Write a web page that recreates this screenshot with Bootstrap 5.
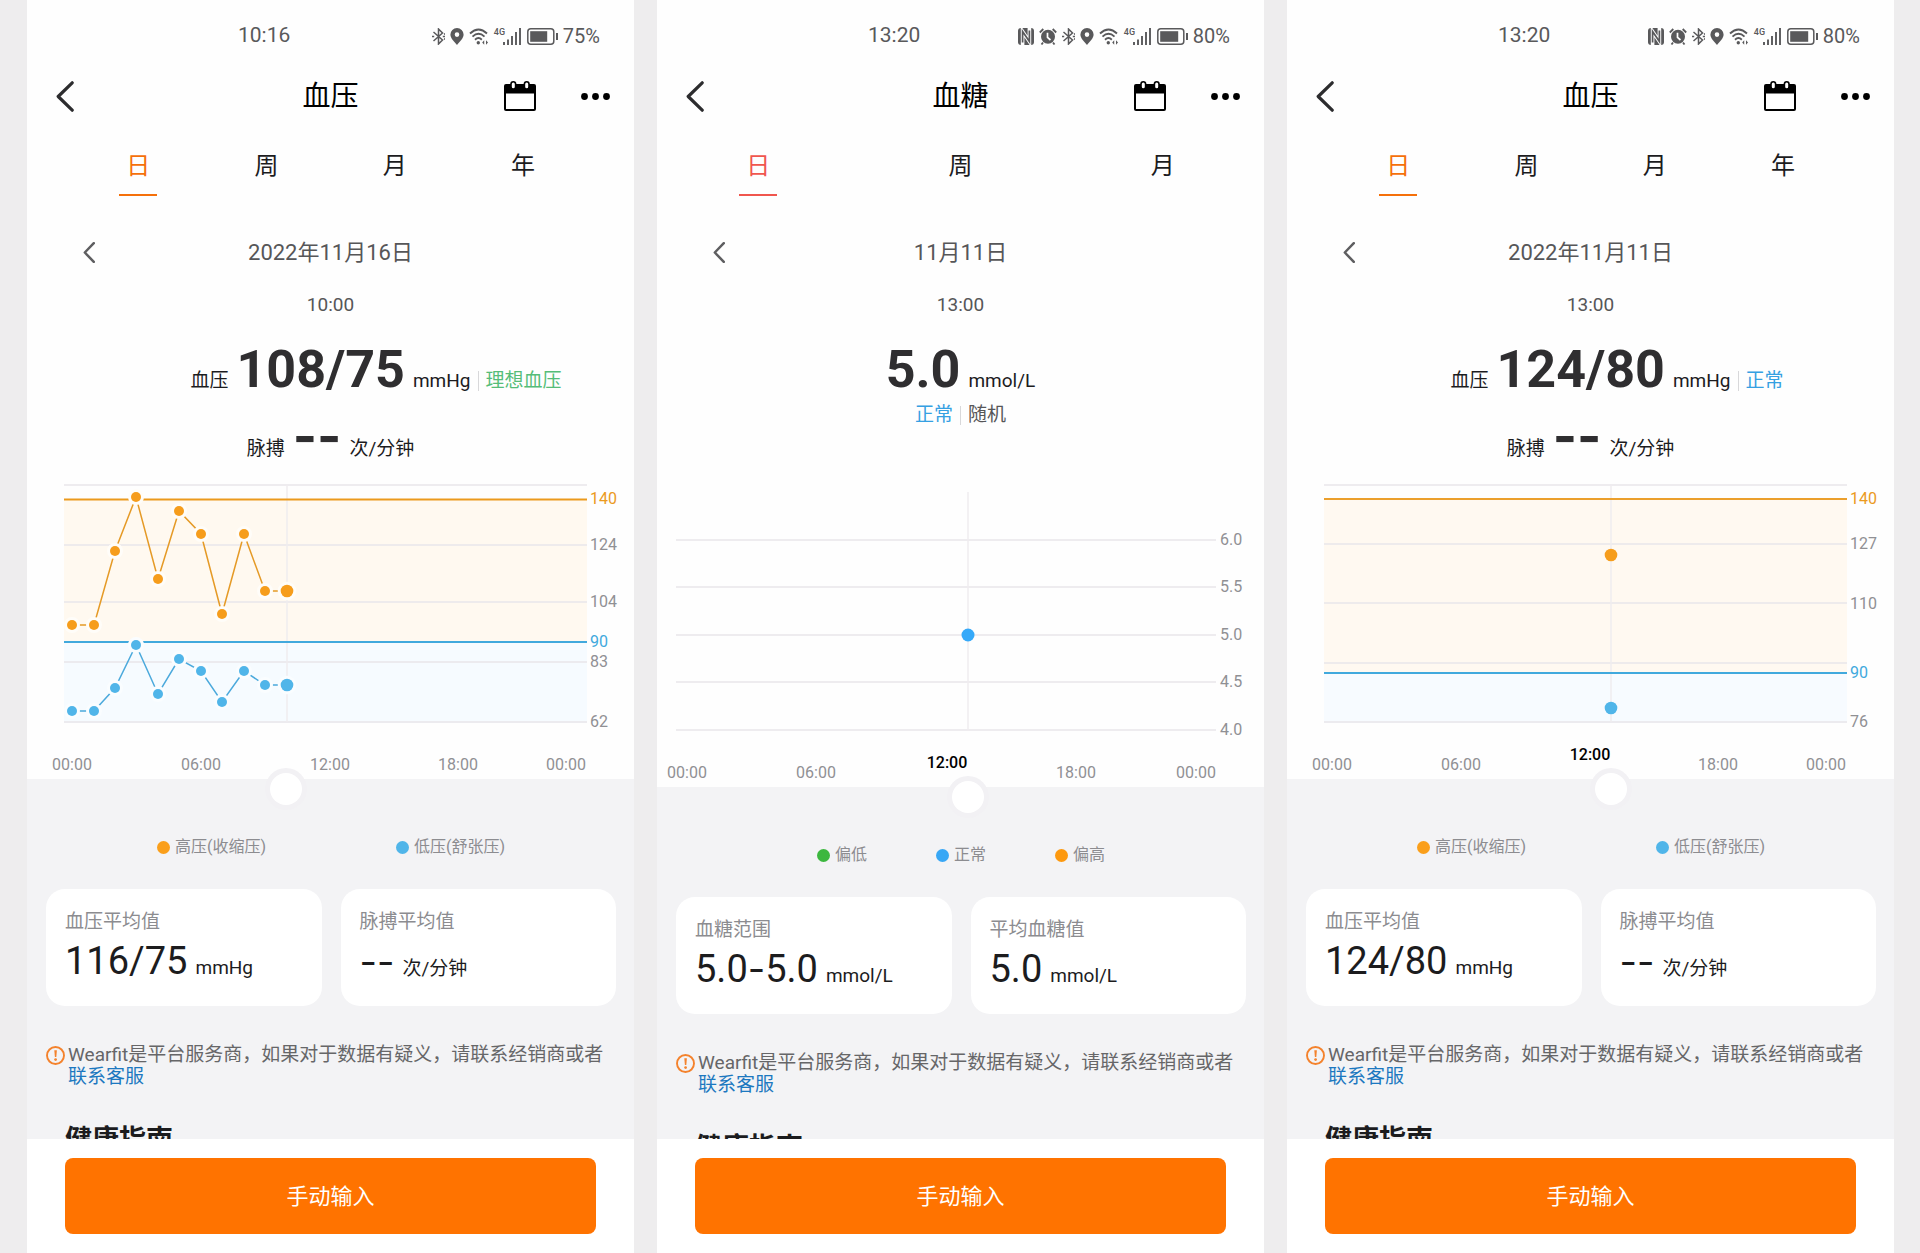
<!DOCTYPE html>
<html lang="zh-CN">
<head>
<meta charset="utf-8">
<meta name="viewport" content="width=device-width, initial-scale=1">
<title>Wearfit 健康数据</title>
<link href="https://cdn.jsdelivr.net/npm/bootstrap@5.3.0/dist/css/bootstrap.min.css" rel="stylesheet">
<style>
  body { background: #eeedee; font-family: Roboto, "Noto Sans CJK SC", sans-serif; color: #1c1c1e; }
  button, input { font-family: inherit; }
  .stage { height: 100vh; padding: 0 26px 0 27px; gap: 23px; }
  .phone { flex: 1 1 0; min-width: 0; background: #fefefe; --accent: #f5700a; }
  .phone.sugar { --accent: #f0564e; }
  .scroller { min-height: 0; }

  .statusbar { height: 72px; padding: 0 34px 0 211px; font-size: 21px; color: #59595b; }
  .statusbar .sys { gap: 5px; font-size: 20px; }
  .statusbar svg { flex: none; }
  .net { display: flex; width: 28px; height: 17px; font-size: 9px; line-height: 9px; font-weight: 500; }
  .net svg { margin-left: -2px; }

  .titlebar { height: 46px; padding: 0 24px 0 29px; display: grid; grid-template-columns: 1fr auto 1fr; }
  .titlebar h1 { font-size: 28px; line-height: 46px; font-weight: 400; color: #000; padding: 2px 5px 0 0; }
  .titlebar .acts { gap: 45px; }
  .bare { border: 0; background: none; padding: 0; display: flex; }

  .periods { margin-top: 30px; padding: 0 47px; }
  .sugar .periods { padding: 0; }
  .periods a { color: #1c1c1e; font-size: 24px; line-height: 36px; text-decoration: none; flex: 1 1 0; display: flex; flex-direction: column; align-items: center; }
  .periods a::after { content: ""; width: 38px; height: 2px; margin-top: 10px; }
  .periods a.on { color: var(--accent); }
  .periods a.on::after { background: var(--accent); }

  .dayrow { height: 40px; margin-top: 36px; padding: 0 56px; display: grid; grid-template-columns: 1fr auto 1fr; align-items: center; font-size: 22px; color: #565658; }
  .clock { margin-top: 20px; font-size: 19px; line-height: 26px; color: #565658; }
  .reading { display: grid; grid-template-columns: 1fr auto 1fr; align-items: baseline; margin-top: 22px; height: 60px; font-size: 19px; line-height: 60px; }
  .reading + .reading { margin-top: 7px; }
  .reading .core { grid-column: 2; gap: 8px; }
  .big { font-size: 52px; font-weight: 700; color: #2f2e30; }
  .dash { font-family: Inter, sans-serif; }
  .flag { line-height: 20px; margin-left: 7px; padding-left: 7px; border-left: 1px solid #d8d8da; justify-self: start; }
  .good { color: #55bd78; }
  .normal { color: #35a0e2; }
  .kind { font-size: 19px; line-height: 26px; margin: 2px 0 38px; color: #565658; gap: 7px; }
  .kind i { width: 1px; height: 19px; background: #d8d8da; }

  .chart svg { display: block; width: 100%; height: auto; font-size: 16px; fill: #909094; }
  .chart .grid { stroke: #e9e6ea; stroke-width: 1.5; }
  .chart .cursor { stroke: #efecef; stroke-width: 1.5; }
  .chart .now { fill: #000; font-weight: 500; }
  .chart .wire { fill: none; stroke-width: 1.5; }
  .chart input { position: absolute; left: 29px; right: 53px; bottom: -26px; width: auto; height: 32px; margin: 0; appearance: none; background: none; z-index: 1; }
  .sugar .chart input { left: 14px; right: 63px; }
  .chart input::-webkit-slider-thumb { appearance: none; width: 32px; height: 32px; border-radius: 50%; background: #fff; border: 0; box-shadow: 0 0 0 5px #f2f1f4; }
  .chart input::-moz-range-thumb { width: 32px; height: 32px; border-radius: 50%; background: #fff; border: 0; box-shadow: 0 0 0 5px #f2f1f4; }

  .lower { background: #f3f3f5; padding: 56px 18px 0 19px; }
  .keys { gap: 130px; font-size: 16px; line-height: 24px; color: #8c8c90; }
  .sugar .keys { gap: 69px; }
  .keys span { display: flex; align-items: center; gap: 5px; }
  .keys i { width: 13px; height: 13px; border-radius: 50%; }
  .tiles { margin-top: 30px; gap: 19px; }
  .tile { flex: 1 1 0; background: #fff; border-radius: 19px; padding: 19px 19px 20px; }
  .tile h2 { font-size: 19px; line-height: 28px; font-weight: 400; color: #8c8c90; margin: 0 0 1px; }
  .tile p { font-size: 19px; line-height: 48px; height: 49px; gap: 8px; }
  .tile .num { font-size: 38px; }
  .note { margin-top: 38px; gap: 3px; font-size: 19px; line-height: 22px; color: #666668; }
  .note svg { flex: none; margin-top: 2px; }
  .note a { color: #1c78c0; text-decoration: none; }
  .guide { margin: 32px 0 0 19px; font-size: 27px; line-height: 40px; font-weight: 700; }

  .dock { background: #fff; padding: 19px 38px; }
  .entry { --bs-btn-bg: #ff7300; --bs-btn-color: #fff; --bs-btn-hover-bg: #f06c00; --bs-btn-hover-color: #fff; --bs-btn-border-radius: 8px; --bs-btn-border-width: 0; --bs-btn-font-size: 22px; height: 76px; }
</style>
<script src="https://cdn.jsdelivr.net/npm/bootstrap@5.3.0/dist/js/bootstrap.bundle.min.js" defer></script>
</head>
<body>
<svg width="0" height="0" class="position-absolute" aria-hidden="true">
  <symbol id="nfc" viewBox="0 0 16 17"><rect width="16" height="17" rx="3" fill="#59595b"/><path d="M4.600 17V3.500L11.400 13.500V0" fill="none" stroke="#fefefe" stroke-width="3.600"/><path d="M4.600 14.500V3.500L11.400 13.500V2.500" fill="none" stroke="#59595b" stroke-width="1.700"/></symbol>
  <symbol id="alarm" viewBox="0 0 18 17"><circle cx="9" cy="8.800" r="7" fill="#59595b"/><path d="M.8 4.500L4.300 1M17.200 4.500L13.700 1M4 14.500L2.500 16.500M14 14.500L15.500 16.500" stroke="#59595b" stroke-width="1.800"/><path d="M8.500 4.800V9.300L11.500 12" fill="none" stroke="#fefefe" stroke-width="1.700"/></symbol>
  <symbol id="bt" viewBox="0 0 13 17"><path d="M1.500 4L10.500 12L6.500 16V1L10.500 5L1.500 13" fill="none" stroke="#59595b" stroke-width="1.500"/><path d="M0 8.500H2.200M10.800 8.500H13M12 6.300L13 5.800M12 10.700L13 11.200" stroke="#59595b" stroke-width="1.600"/></symbol>
  <symbol id="pin" viewBox="0 0 14 17"><path d="M7 0A6.600 6.600 0 0 0 .4 6.600C.4 10.500 4.500 14 7 17C9.500 14 13.600 10.500 13.600 6.600A6.600 6.600 0 0 0 7 0zM7 4.300A2.300 2.300 0 1 1 7 8.900A2.300 2.300 0 1 1 7 4.300z" fill="#59595b"/></symbol>
  <symbol id="wifi" viewBox="0 0 20 17"><path d="M1 5.500Q9.500-2.500 18 5.500M3.500 8.600Q9.500 3 15.500 8.600M6 11.700Q9.500 8.500 12.800 11.700" fill="none" stroke="#59595b" stroke-width="1.900"/><circle cx="9.300" cy="14.800" r="1.700" fill="#59595b"/><path d="M13.200 14.500L15.200 12.300V16.700zM19 14.500L17 12.300V16.700z" fill="#59595b"/></symbol>
  <symbol id="bars" viewBox="0 0 18 17"><path d="M1 14V17M5 11.500V17M9 8V17M13 4V17M17 0V17" stroke="#59595b" stroke-width="1.900"/></symbol>
  <symbol id="back" viewBox="0 0 18 31"><path d="M16.200 1.800L2.200 15.500L16.200 29.200" fill="none" stroke="#2c2c2e" stroke-width="3.200" stroke-linecap="round" stroke-linejoin="round"/></symbol>
  <symbol id="prev" viewBox="0 0 12 21"><path d="M10.800 1.200L1.800 10.500L10.800 19.800" fill="none" stroke="#5e5e60" stroke-width="2.500" stroke-linecap="round" stroke-linejoin="round"/></symbol>
  <symbol id="cal" viewBox="0 0 32 30"><path d="M2 3H30Q32 3 32 5V28Q32 30 30 30H2Q0 30 0 28V5Q0 3 2 3z"/><path d="M2 12.500H30V28H2z" fill="#fff"/><rect x="7" y=".8" width="4.600" height="7.200" rx="2.300" fill="#fff" stroke="#000" stroke-width="1.600"/><rect x="20.400" y=".8" width="4.600" height="7.200" rx="2.300" fill="#fff" stroke="#000" stroke-width="1.600"/></symbol>
  <symbol id="more" viewBox="0 0 29 7"><circle cx="3.500" cy="3.500" r="3.400"/><circle cx="14.500" cy="3.500" r="3.400"/><circle cx="25.500" cy="3.500" r="3.400"/></symbol>
  <symbol id="warn" viewBox="0 0 19 19"><circle cx="9.500" cy="9.500" r="8.500" fill="none" stroke="#f4822c" stroke-width="1.900"/><path d="M8.300 4.300H10.900L10.300 11H8.900z" fill="#f4822c"/><circle cx="9.600" cy="13.600" r="1.400" fill="#f4822c"/></symbol>
</svg>

<main class="stage d-flex">

  <!-- 血压 11月16日 -->
  <section class="phone d-flex flex-column">
    <div class="scroller flex-fill overflow-hidden">
      <div class="statusbar d-flex justify-content-between align-items-center">
        <span>10:16</span>
        <div class="sys d-flex align-items-center">
          <svg width="13" height="17"><use href="#bt"/></svg><svg width="14" height="17"><use href="#pin"/></svg><svg width="20" height="17"><use href="#wifi"/></svg><span class="net">4G<svg width="18" height="17"><use href="#bars"/></svg></span>
          <svg width="31" height="17" fill="#59595b"><rect x=".8" y=".8" width="26" height="15.400" rx="3" fill="none" stroke="#59595b" stroke-width="1.500"/><rect x="3.200" y="3.200" width="17" height="10.600"/><path d="M29 5H31V12H29z"/></svg>
          <span>75%</span>
        </div>
      </div>
      <header class="titlebar align-items-center">
        <button class="bare" aria-label="返回"><svg width="18" height="31"><use href="#back"/></svg></button>
        <h1 class="m-0">血压</h1>
        <div class="acts d-flex align-items-center justify-content-end">
          <button class="bare" aria-label="日历"><svg width="32" height="30"><use href="#cal"/></svg></button>
          <button class="bare" aria-label="更多"><svg width="29" height="7"><use href="#more"/></svg></button>
        </div>
      </header>
      <nav class="periods d-flex"><a class="on" href="#" aria-current="true">日</a><a href="#">周</a><a href="#">月</a><a href="#">年</a></nav>
      <div class="dayrow"><button class="bare" aria-label="前一天"><svg width="12" height="21"><use href="#prev"/></svg></button><span>2022年11月16日</span></div>
      <div class="clock text-center">10:00</div>
      <div class="reading"><div class="core d-flex align-items-baseline"><span>血压</span><span class="big">108/75</span><span>mmHg</span></div><span class="flag good">理想血压</span></div>
      <div class="reading"><div class="core d-flex align-items-baseline"><span>脉搏</span><span class="big dash">--</span><span>次/分钟</span></div></div>
      <div class="chart position-relative">
        <svg viewBox="0 0 607 312" role="img" aria-label="血压趋势">
          <rect x="37" y="33" width="523" height="143" fill="#fff9f0"/>
          <rect x="37" y="176" width="523" height="80" fill="#f6fbff"/>
          <path class="grid" d="M37 18H560M37 78H560M37 135H560M37 195H560M37 255H560"/>
          <path class="cursor" d="M260 18V255"/>
          <path d="M37 32.500H560" stroke="#eb9a1d" stroke-width="2"/>
          <path d="M37 175H560" stroke="#41a9dd" stroke-width="2"/>
          <path class="wire" stroke="#e59a26" d="M45 158H67L88 84L109 30L131 112L152 44L174 67L195 147L217 67L238 124H260"/>
          <g fill="#f69d1c" stroke="#fffdf9" stroke-width="6" paint-order="stroke">
            <circle cx="45" cy="158" r="5"/><circle cx="67" cy="158" r="5"/><circle cx="88" cy="84" r="5"/><circle cx="109" cy="30" r="5"/><circle cx="131" cy="112" r="5"/><circle cx="152" cy="44" r="5"/><circle cx="174" cy="67" r="5"/><circle cx="195" cy="147" r="5"/><circle cx="217" cy="67" r="5"/><circle cx="238" cy="124" r="5"/><circle cx="260" cy="124" r="6.300"/>
          </g>
          <path class="wire" stroke="#4ba9dc" d="M45 244H67L88 221L109 178L131 227L152 192L174 204L195 235L217 204L238 218H260"/>
          <g fill="#50b5e9" stroke="#fafdff" stroke-width="6" paint-order="stroke">
            <circle cx="45" cy="244" r="5"/><circle cx="67" cy="244" r="5"/><circle cx="88" cy="221" r="5"/><circle cx="109" cy="178" r="5"/><circle cx="131" cy="227" r="5"/><circle cx="152" cy="192" r="5"/><circle cx="174" cy="204" r="5"/><circle cx="195" cy="235" r="5"/><circle cx="217" cy="204" r="5"/><circle cx="238" cy="218" r="5"/><circle cx="260" cy="218" r="6.300"/>
          </g>
          <text x="563" y="37" fill="#eb9a1d">140</text><text x="563" y="83">124</text><text x="563" y="140">104</text><text x="563" y="180" fill="#41a9dd">90</text><text x="563" y="200">83</text><text x="563" y="260">62</text>
          <g text-anchor="middle"><text x="45" y="303">00:00</text><text x="174" y="303">06:00</text><text x="303" y="303">12:00</text><text x="431" y="303">18:00</text><text x="539" y="303">00:00</text></g>
        </svg>
        <input type="range" min="0" max="23" value="10" aria-label="选择时间">
      </div>
      <div class="lower">
        <div class="keys d-flex justify-content-center"><span><i style="background:#fa9f1b"></i>高压(收缩压)</span><span><i style="background:#50b5e9"></i>低压(舒张压)</span></div>
        <div class="tiles d-flex">
          <article class="tile"><h2>血压平均值</h2><p class="d-flex align-items-baseline m-0"><span class="num">116/75</span>mmHg</p></article>
          <article class="tile"><h2>脉搏平均值</h2><p class="d-flex align-items-baseline m-0"><span class="num dash">--</span>次/分钟</p></article>
        </div>
        <div class="note d-flex"><svg width="19" height="19"><use href="#warn"/></svg><div>Wearfit是平台服务商，如果对于数据有疑义，请联系经销商或者<a href="#">联系客服</a></div></div>
        <h2 class="guide">健康指南</h2>
      </div>
    </div>
    <footer class="dock position-relative"><button class="btn entry w-100">手动输入</button></footer>
  </section>

  <!-- 血糖 11月11日 -->
  <section class="phone sugar d-flex flex-column">
    <div class="scroller flex-fill overflow-hidden">
      <div class="statusbar d-flex justify-content-between align-items-center">
        <span>13:20</span>
        <div class="sys d-flex align-items-center">
          <svg width="16" height="17"><use href="#nfc"/></svg><svg width="18" height="17"><use href="#alarm"/></svg><svg width="13" height="17"><use href="#bt"/></svg><svg width="14" height="17"><use href="#pin"/></svg><svg width="20" height="17"><use href="#wifi"/></svg><span class="net">4G<svg width="18" height="17"><use href="#bars"/></svg></span>
          <svg width="31" height="17" fill="#59595b"><rect x=".8" y=".8" width="26" height="15.400" rx="3" fill="none" stroke="#59595b" stroke-width="1.500"/><rect x="3.200" y="3.200" width="18" height="10.600"/><path d="M29 5H31V12H29z"/></svg>
          <span>80%</span>
        </div>
      </div>
      <header class="titlebar align-items-center">
        <button class="bare" aria-label="返回"><svg width="18" height="31"><use href="#back"/></svg></button>
        <h1 class="m-0">血糖</h1>
        <div class="acts d-flex align-items-center justify-content-end">
          <button class="bare" aria-label="日历"><svg width="32" height="30"><use href="#cal"/></svg></button>
          <button class="bare" aria-label="更多"><svg width="29" height="7"><use href="#more"/></svg></button>
        </div>
      </header>
      <nav class="periods d-flex"><a class="on" href="#" aria-current="true">日</a><a href="#">周</a><a href="#">月</a></nav>
      <div class="dayrow"><button class="bare" aria-label="前一天"><svg width="12" height="21"><use href="#prev"/></svg></button><span>11月11日</span></div>
      <div class="clock text-center">13:00</div>
      <div class="reading"><div class="core d-flex align-items-baseline"><span class="big">5.0</span><span>mmol/L</span></div></div>
      <div class="kind d-flex justify-content-center align-items-center"><span class="normal">正常</span><i></i><span>随机</span></div>
      <div class="chart position-relative">
        <svg viewBox="0 0 607 321" role="img" aria-label="血糖趋势">
          <path class="grid" d="M19 74H559M19 121H559M19 169H559M19 216H559M19 264H559"/>
          <path class="cursor" d="M311 26V265"/>
          <circle cx="311" cy="169" r="6.500" fill="#35a9f9"/>
          <text x="563" y="79">6.0</text><text x="563" y="126">5.5</text><text x="563" y="174">5.0</text><text x="563" y="221">4.5</text><text x="563" y="269">4.0</text>
          <g text-anchor="middle"><text x="30" y="312">00:00</text><text x="159" y="312">06:00</text><text class="now" x="290" y="302">12:00</text><text x="419" y="312">18:00</text><text x="539" y="312">00:00</text></g>
        </svg>
        <input type="range" min="0" max="23" value="13" aria-label="选择时间">
      </div>
      <div class="lower">
        <div class="keys d-flex justify-content-center"><span><i style="background:#3cb73f"></i>偏低</span><span><i style="background:#38a7f5"></i>正常</span><span><i style="background:#fd990f"></i>偏高</span></div>
        <div class="tiles d-flex">
          <article class="tile"><h2>血糖范围</h2><p class="d-flex align-items-baseline m-0"><span class="num">5.0<span class="dash lh-1">-</span>5.0</span>mmol/L</p></article>
          <article class="tile"><h2>平均血糖值</h2><p class="d-flex align-items-baseline m-0"><span class="num">5.0</span>mmol/L</p></article>
        </div>
        <div class="note d-flex"><svg width="19" height="19"><use href="#warn"/></svg><div>Wearfit是平台服务商，如果对于数据有疑义，请联系经销商或者<a href="#">联系客服</a></div></div>
        <h2 class="guide">健康指南</h2>
      </div>
    </div>
    <footer class="dock position-relative"><button class="btn entry w-100">手动输入</button></footer>
  </section>

  <!-- 血压 11月11日 -->
  <section class="phone d-flex flex-column">
    <div class="scroller flex-fill overflow-hidden">
      <div class="statusbar d-flex justify-content-between align-items-center">
        <span>13:20</span>
        <div class="sys d-flex align-items-center">
          <svg width="16" height="17"><use href="#nfc"/></svg><svg width="18" height="17"><use href="#alarm"/></svg><svg width="13" height="17"><use href="#bt"/></svg><svg width="14" height="17"><use href="#pin"/></svg><svg width="20" height="17"><use href="#wifi"/></svg><span class="net">4G<svg width="18" height="17"><use href="#bars"/></svg></span>
          <svg width="31" height="17" fill="#59595b"><rect x=".8" y=".8" width="26" height="15.400" rx="3" fill="none" stroke="#59595b" stroke-width="1.500"/><rect x="3.200" y="3.200" width="18" height="10.600"/><path d="M29 5H31V12H29z"/></svg>
          <span>80%</span>
        </div>
      </div>
      <header class="titlebar align-items-center">
        <button class="bare" aria-label="返回"><svg width="18" height="31"><use href="#back"/></svg></button>
        <h1 class="m-0">血压</h1>
        <div class="acts d-flex align-items-center justify-content-end">
          <button class="bare" aria-label="日历"><svg width="32" height="30"><use href="#cal"/></svg></button>
          <button class="bare" aria-label="更多"><svg width="29" height="7"><use href="#more"/></svg></button>
        </div>
      </header>
      <nav class="periods d-flex"><a class="on" href="#" aria-current="true">日</a><a href="#">周</a><a href="#">月</a><a href="#">年</a></nav>
      <div class="dayrow"><button class="bare" aria-label="前一天"><svg width="12" height="21"><use href="#prev"/></svg></button><span>2022年11月11日</span></div>
      <div class="clock text-center">13:00</div>
      <div class="reading"><div class="core d-flex align-items-baseline"><span>血压</span><span class="big">124/80</span><span>mmHg</span></div><span class="flag normal">正常</span></div>
      <div class="reading"><div class="core d-flex align-items-baseline"><span>脉搏</span><span class="big dash">--</span><span>次/分钟</span></div></div>
      <div class="chart position-relative">
        <svg viewBox="0 0 607 312" role="img" aria-label="血压趋势">
          <rect x="37" y="32" width="523" height="174" fill="#fff9f1"/>
          <rect x="37" y="206" width="523" height="50" fill="#f7fbff"/>
          <path class="grid" d="M37 18H560M37 77H560M37 136H560M37 196H560M37 255H560"/>
          <path class="cursor" d="M324 18V255"/>
          <path d="M37 32H560" stroke="#eb9f2c" stroke-width="2"/>
          <path d="M37 206H560" stroke="#41a9dd" stroke-width="2"/>
          <circle cx="324" cy="88" r="6.300" fill="#f69d1c"/><circle cx="324" cy="241" r="6.300" fill="#50b5e9"/>
          <text x="563" y="37" fill="#eb9a1d">140</text><text x="563" y="82">127</text><text x="563" y="142">110</text><text x="563" y="211" fill="#41a9dd">90</text><text x="563" y="260">76</text>
          <g text-anchor="middle"><text x="45" y="303">00:00</text><text x="174" y="303">06:00</text><text class="now" x="303" y="293">12:00</text><text x="431" y="303">18:00</text><text x="539" y="303">00:00</text></g>
        </svg>
        <input type="range" min="0" max="23" value="13" aria-label="选择时间">
      </div>
      <div class="lower">
        <div class="keys d-flex justify-content-center"><span><i style="background:#fa9f1b"></i>高压(收缩压)</span><span><i style="background:#50b5e9"></i>低压(舒张压)</span></div>
        <div class="tiles d-flex">
          <article class="tile"><h2>血压平均值</h2><p class="d-flex align-items-baseline m-0"><span class="num">124/80</span>mmHg</p></article>
          <article class="tile"><h2>脉搏平均值</h2><p class="d-flex align-items-baseline m-0"><span class="num dash">--</span>次/分钟</p></article>
        </div>
        <div class="note d-flex"><svg width="19" height="19"><use href="#warn"/></svg><div>Wearfit是平台服务商，如果对于数据有疑义，请联系经销商或者<a href="#">联系客服</a></div></div>
        <h2 class="guide">健康指南</h2>
      </div>
    </div>
    <footer class="dock position-relative"><button class="btn entry w-100">手动输入</button></footer>
  </section>

</main>
</body>
</html>
